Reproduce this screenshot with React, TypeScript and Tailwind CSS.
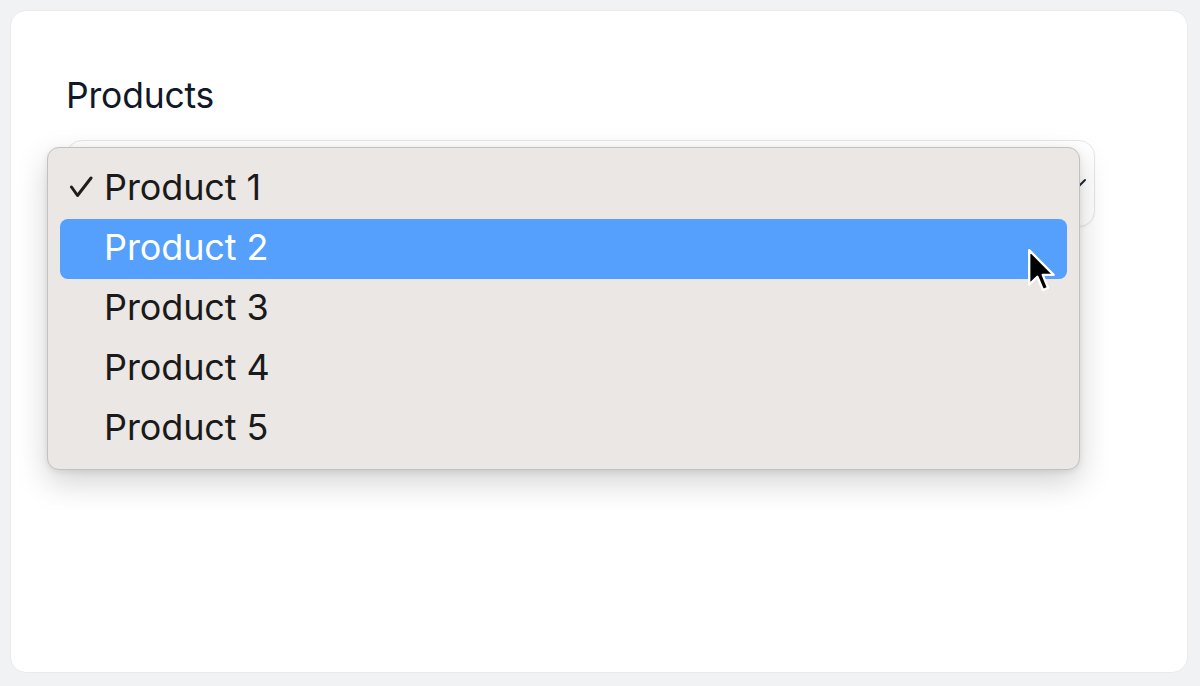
const products = ['Product 1', 'Product 2', 'Product 3', 'Product 4', 'Product 5'];

function Cursor() {
  return (
    <svg
      className="absolute left-[967px] top-[29px]"
      width="28"
      height="44"
      viewBox="-1 -1 13 20.5"
    >
      <path
        d="M0 0 L0 16 L3.8 12.4 L6.4 18.6 L8.8 17.6 L6.3 11.5 L11.4 11.5 Z"
        fill="#000"
        stroke="#fff"
        strokeWidth="1.1"
        strokeLinejoin="round"
      />
    </svg>
  );
}

function CheckMark() {
  return (
    <svg width="24" height="22" viewBox="0 0 24 22" fill="none" stroke="#1e1e1e" strokeWidth="3" strokeLinecap="round" strokeLinejoin="round">
      <path d="M2.5 11 L8.5 19.5 L22 2" />
    </svg>
  );
}

export default function App() {
  const selected = 0;
  const active = 1;

  return (
    <div className="h-[686px] w-full bg-[#f0f2f4] pl-[10px] pt-[10px] pr-[12px] pb-[13px] font-['Inter',sans-serif]">
      <div className="h-full rounded-[16px] bg-white border border-[#e8eaed] pl-[55px] pt-[65px] pr-[92px]">
        <label className="block text-[35.5px] leading-[40px] text-[#111827] tracking-[-0.2px]">Products</label>

        {/* Select */}
        <div className="relative mt-[24px] h-[87px] rounded-[16px] border border-[#e6e7ea] bg-white shadow-[0_1px_2px_rgba(0,0,0,0.04)]">
          <svg
            className="absolute right-[8px] top-[37px]"
            width="14"
            height="10"
            viewBox="0 0 14 10"
            fill="none"
            stroke="#1f2937"
            strokeWidth="2"
            strokeLinecap="round"
          >
            <path d="M1 2 L7 8 L13 2" />
          </svg>

          {/* Open menu */}
          <div className="absolute left-[-20px] top-[6px] w-[1033px] h-[323px] rounded-[12px] bg-[#ebe7e4] border border-[#c4c0bd] shadow-[0_12px_32px_rgba(0,0,0,0.18),0_2px_6px_rgba(0,0,0,0.08)] px-[12px] py-[11px]">
            {products.map((p, i) => (
              <div
                key={p}
                className={
                  i === active
                    ? 'relative flex h-[60px] items-center rounded-[8px] bg-[#559ffd] text-white'
                    : 'relative flex h-[60px] items-center rounded-[8px] text-[#1a1a1a]'
                }
              >
                <div className="w-[44px] pl-[9px] mb-[4px] flex items-center">
                  {i === selected && <CheckMark />}
                </div>
                <span className="mb-[4px] text-[36px] leading-[40px] tracking-[-0.1px]">{p}</span>
                {i === active && <Cursor />}
              </div>
            ))}
          </div>
        </div>
      </div>
    </div>
  );
}
